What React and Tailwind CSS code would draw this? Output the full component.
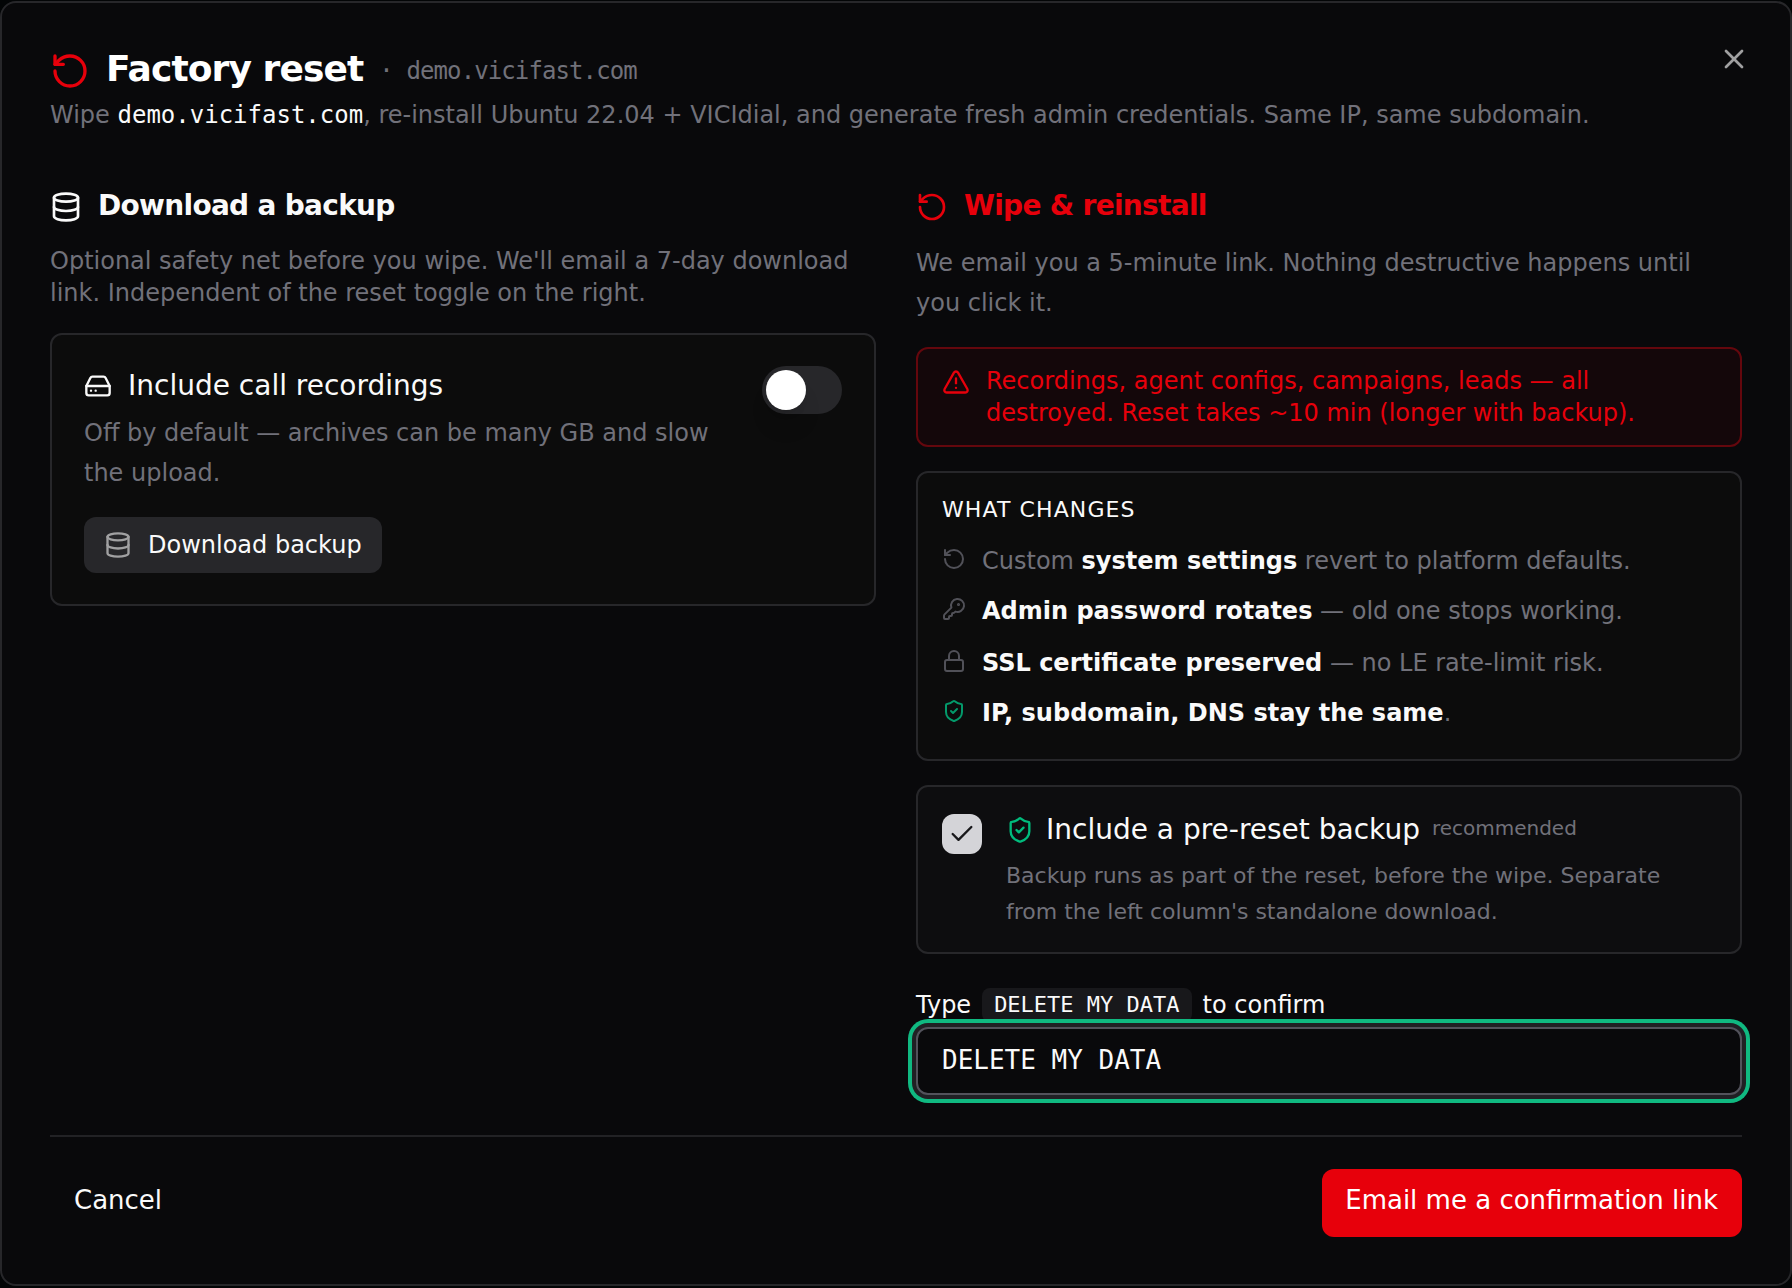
import React from "react";
import { RotateCcw, Database, HardDrive, TriangleAlert, KeyRound, Lock, ShieldCheck, Check, X } from "lucide-react";

const changes = [
  { Icon: RotateCcw, tone: "text-[#515158]", gap: "mt-0", before: "Custom ", strong: "system settings", after: " revert to platform defaults." },
  { Icon: KeyRound, tone: "text-[#515158]", gap: "mt-[10px]", strong: "Admin password rotates", after: " — old one stops working." },
  { Icon: Lock, tone: "text-[#515158]", gap: "mt-[12px]", strong: "SSL certificate preserved", after: " — no LE rate-limit risk." },
  { Icon: ShieldCheck, tone: "text-[#03996a]", gap: "mt-[10px]", strong: "IP, subdomain, DNS stay the same", after: "." },
];

function Header() {
  return (
    <header className="flex justify-between">
      <div>
        <div className="flex h-[40px] items-center tracking-[-0.9px]">
          <RotateCcw size={40} className="shrink-0 text-[#e7000b]" />
          <h1 className="ml-4 pb-1 text-[36px] leading-[40px] font-bold text-white">Factory reset</h1>
          <span className="ml-4 font-['DejaVu_Sans_Mono',monospace] text-[24px] leading-[40px] text-[#71717a]">· demo.vicifast.com</span>
        </div>
        <p className="mt-[8px] text-[24px] leading-[32px] text-[#71717a]">
          Wipe <span className="font-['DejaVu_Sans_Mono',monospace] text-neutral-50">demo.vicifast.com</span>, re-install Ubuntu 22.04 + VICIdial, and
          generate fresh admin credentials. Same IP, same subdomain.
        </p>
      </div>
      <button aria-label="Close" className="-mt-2 -mr-2 h-8 w-8 text-[#a0a0a1]">
        <X size={32} />
      </button>
    </header>
  );
}

function BackupColumn() {
  return (
    <section>
      <div className="flex h-8 items-center gap-4 text-neutral-50">
        <Database size={32} />
        <h2 className="pb-[2px] text-[28px] leading-8 font-bold tracking-[-0.7px]">Download a backup</h2>
      </div>
      <p className="mt-[22px] text-[24px] leading-[32px] text-[#71717a]">
        Optional safety net before you wipe. We'll email a 7-day download link. Independent of the reset toggle on the right.
      </p>
      <div className="mt-[24px] h-[273px] rounded-xl border-2 border-[#27272a] bg-[#0c0c0c] px-8 pt-[31px]">
        <div className="flex justify-between">
          <div className="w-[640px]">
            <div className="flex h-[40px] items-center gap-4 text-neutral-50">
              <HardDrive size={28} />
              <span className="text-[28px] leading-[40px]">Include call recordings</span>
            </div>
            <p className="mt-[7px] text-[24px] leading-[40px] text-[#71717a]">Off by default — archives can be many GB and slow the upload.</p>
          </div>
          <div className="flex h-12 w-20 rounded-full bg-[#27272a] p-1">
            <div className="h-10 w-10 rounded-full bg-white shadow-xl" />
          </div>
        </div>
        <button className="mt-[24px] flex h-14 items-center gap-4 rounded-xl bg-[#27272a] px-5 text-[24px] text-neutral-50">
          <Database size={28} className="text-[#a1a1a2]" />
          Download backup
        </button>
      </div>
    </section>
  );
}

function WipeColumn() {
  return (
    <section>
      <div className="flex h-8 items-center gap-4 text-[#e7000b]">
        <RotateCcw size={32} />
        <h2 className="pb-[2px] text-[28px] leading-8 font-bold tracking-[-0.7px]">Wipe &amp; reinstall</h2>
      </div>
      <p className="mt-5 text-[24px] leading-[40px] text-[#71717a]">We email you a 5-minute link. Nothing destructive happens until you click it.</p>
      <div className="mt-[24px] flex gap-4 rounded-xl border-2 border-[#64070d] bg-[#14070a] px-6 py-4 text-[24px] leading-[32px] text-[#e7000b]">
        <TriangleAlert size={28} className="mt-[3px] shrink-0" />
        <p>Recordings, agent configs, campaigns, leads — all destroyed. Reset takes ~10 min (longer with backup).</p>
      </div>
      <div className="mt-6 h-[290px] rounded-xl border-2 border-[#27272a] bg-[#0c0c0c] px-6 pt-[21px]">
        <h3 className="text-[22px] leading-[32px] tracking-[0.05em] text-neutral-50">WHAT CHANGES</h3>
        <ul className="mt-[15px] text-[24px] leading-[40px]">
          {changes.map(({ Icon, tone, gap, before, strong, after }) => (
            <li key={strong} className={`flex gap-4 text-[#71717a] ${gap}`}>
              <Icon size={24} className={`mt-[6px] shrink-0 ${tone}`} />
              <span>
                {before}
                <strong className="font-bold text-neutral-50">{strong}</strong>
                {after}
              </span>
            </li>
          ))}
        </ul>
      </div>
      <div className="mt-6 flex h-[169px] gap-6 rounded-xl border-2 border-[#27272a] bg-[#0d0d0f] px-6 pt-[27px]">
        <div className="flex h-10 w-10 shrink-0 items-center justify-center rounded-xl bg-[#d4d4d8] text-[#18181b]">
          <Check size={28} />
        </div>
        <div>
          <div className="flex h-8 items-center">
            <ShieldCheck size={28} className="shrink-0 text-[#00bc7d]" />
            <span className="ml-3 text-[28px] leading-8 text-neutral-50">Include a pre-reset backup</span>
            <span className="ml-3 pb-1 text-[20px] leading-8 text-[#71717a]">recommended</span>
          </div>
          <p className="mt-3 text-[22px] leading-[36px] text-[#71717a]">
            Backup runs as part of the reset, before the wipe. Separate from the left column's standalone download.
          </p>
        </div>
      </div>
      <label className="mt-[35px] flex h-[32px] items-center text-[24px] leading-[32px] text-neutral-50">
        Type
        <code className="mx-[11px] h-[34px] rounded-lg bg-[#18181b] px-3 font-['DejaVu_Sans_Mono',monospace] text-[22px] leading-[34px]">DELETE MY DATA</code>
        to confirm
      </label>
      <input
        readOnly
        value="DELETE MY DATA"
        className="relative mt-[6px] block h-[68px] w-full rounded-xl border-2 border-[#52525b] bg-[#09090b] px-6 pb-[2px] font-['DejaVu_Sans_Mono',monospace] text-[26px] text-neutral-50 shadow-[0_0_0_4px_#202024,0_0_0_8px_#10b981] outline-none"
      />
    </section>
  );
}

export default function App() {
  return (
    <div className="h-[1288px] w-[1792px] overflow-hidden bg-[#030506] pt-[1px] font-['DejaVu_Sans',sans-serif]">
      <div className="h-[1285px] rounded-2xl border-2 border-[#27272a] bg-[#09090b] px-12 pt-[48px]">
        <Header />
        <div className="mt-[60px] grid grid-cols-2 gap-10">
          <BackupColumn />
          <WipeColumn />
        </div>
        <footer className="mt-[40px] flex h-[102px] items-end justify-between border-t-2 border-[#222225] text-[26px]">
          <button className="h-[68px] px-6 pb-[6px] text-neutral-50">Cancel</button>
          <button className="h-[68px] rounded-xl bg-[#e7000b] pr-6 pb-[6px] pl-[23px] text-white">Email me a confirmation link</button>
        </footer>
      </div>
    </div>
  );
}
